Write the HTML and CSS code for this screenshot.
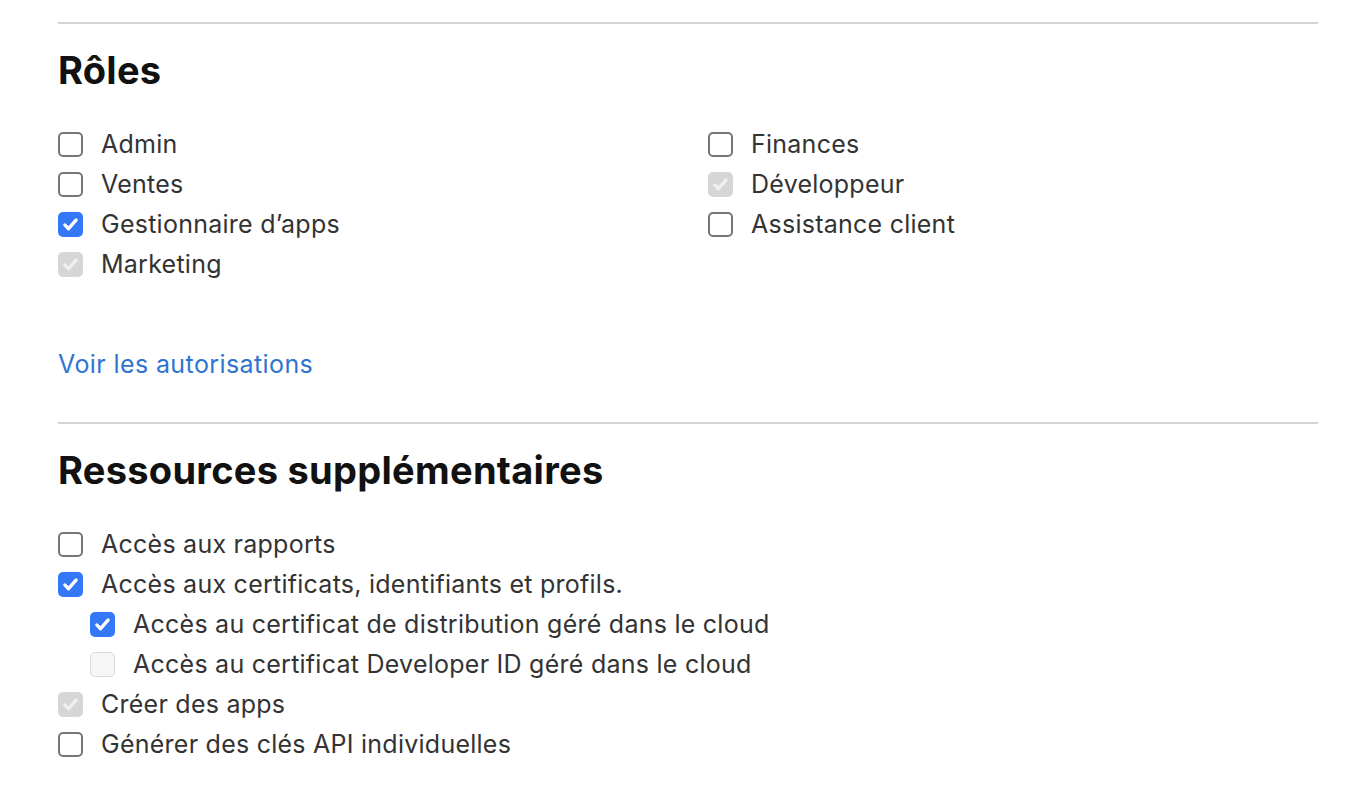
FILE: index.html
```html
<!DOCTYPE html>
<html lang="fr">
<head>
  <meta charset="UTF-8">
  <title>Rôles</title>
  <link rel="stylesheet" href="styles.css">
</head>
<body>

  <!-- Roles -->
  <section class="panel">
    <h2>Rôles</h2>
    <div class="role-grid">
      <ul class="check-list">
        <li><span class="box"></span>Admin</li>
        <li><span class="box"></span>Ventes</li>
        <li><span class="box on"><svg viewBox="0 0 24 24"><path d="M5.5 12.5l4.3 4.3 8.7-10"/></svg></span>Gestionnaire d’apps</li>
        <li><span class="box locked"><svg viewBox="0 0 24 24"><path d="M5.5 12.5l4.3 4.3 8.7-10"/></svg></span>Marketing</li>
      </ul>
      <ul class="check-list">
        <li><span class="box"></span>Finances</li>
        <li><span class="box locked"><svg viewBox="0 0 24 24"><path d="M5.5 12.5l4.3 4.3 8.7-10"/></svg></span>Développeur</li>
        <li><span class="box"></span>Assistance client</li>
      </ul>
    </div>
    <a class="link" href="#">Voir les autorisations</a>
  </section>

  <!-- Additional resources -->
  <section class="panel">
    <h2>Ressources supplémentaires</h2>
    <ul class="check-list">
      <li><span class="box"></span>Accès aux rapports</li>
      <li><span class="box on"><svg viewBox="0 0 24 24"><path d="M5.5 12.5l4.3 4.3 8.7-10"/></svg></span>Accès aux certificats, identifiants et profils.</li>
      <li class="sub"><span class="box on"><svg viewBox="0 0 24 24"><path d="M5.5 12.5l4.3 4.3 8.7-10"/></svg></span>Accès au certificat de distribution géré dans le cloud</li>
      <li class="sub"><span class="box off"></span>Accès au certificat Developer ID géré dans le cloud</li>
      <li><span class="box locked"><svg viewBox="0 0 24 24"><path d="M5.5 12.5l4.3 4.3 8.7-10"/></svg></span>Créer des apps</li>
      <li><span class="box"></span>Générer des clés API individuelles</li>
    </ul>
  </section>

</body>
</html>
```

FILE: styles.css
```css
/* Global */
body {
  margin: 0;
  padding: 22px 44px 0 58px;
  font-family: 'Inter', 'Helvetica Neue', sans-serif;
  color: #333;
  background: #fff;
}

/* Sections */
.panel {
  border-top: 2px solid #d4d4d4;
}
.panel h2 {
  margin: 24px 0 32px;
  font-size: 38px;
  line-height: 44px;
  font-weight: 700;
  color: #111;
  letter-spacing: 0.28px;
}

/* Roles in two columns */
.role-grid {
  display: grid;
  grid-template-columns: 1fr 1fr;
  column-gap: 40px;
}

/* Checkbox rows */
.check-list {
  list-style: none;
  margin: 0;
  padding: 0;
}
.check-list li {
  display: flex;
  align-items: center;
  gap: 18px;
  height: 40px;
  font-size: 25px;
  letter-spacing: 0.25px;
}
.check-list li.sub {
  padding-left: 32px;
}

.box {
  box-sizing: border-box;
  width: 25px;
  height: 25px;
  flex: none;
  border: 2px solid #767676;
  border-radius: 5px;
  background: #fff;
  display: flex;
  align-items: center;
  justify-content: center;
}
.box svg {
  width: 23px;
  height: 23px;
  fill: none;
  stroke: #fff;
  stroke-width: 3.8;
  stroke-linecap: round;
  stroke-linejoin: round;
}
.box.on {
  background: #3478f6;
  border-color: #3478f6;
}
.box.locked {
  background: #d6d6d6;
  border-color: #d6d6d6;
}
.box.locked svg {
  stroke: #f0f0f0;
}
.box.off {
  background: #f6f6f6;
  border: 1.5px solid #d9d9d9;
}

/* Link */
.link {
  display: block;
  margin: 60px 0 38px;
  font-size: 25px;
  line-height: 40px;
  letter-spacing: 0.4px;
  color: #2f74cf;
  text-decoration: none;
}
```
